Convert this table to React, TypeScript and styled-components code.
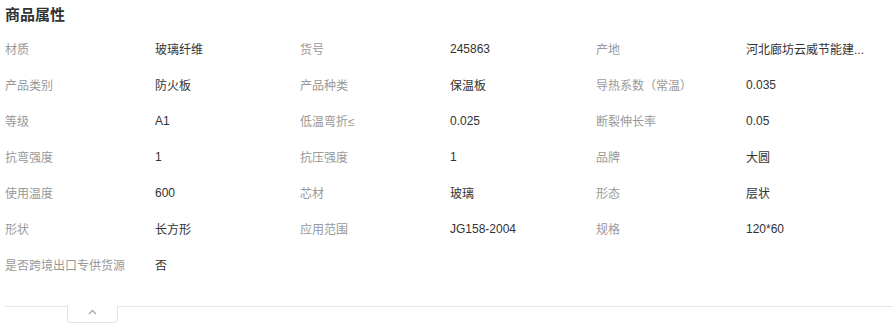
import styled, { createGlobalStyle } from "styled-components";

const GlobalStyle = createGlobalStyle`
  body {
    margin: 0;
    background: #fff;
    font-family: "Liberation Sans", "Noto Sans CJK SC", sans-serif;
  }
`;

type Attr = { label: string; value: string };

const attrs: Attr[] = [
  { label: "材质", value: "玻璃纤维" },
  { label: "货号", value: "245863" },
  { label: "产地", value: "河北廊坊云威节能建..." },
  { label: "产品类别", value: "防火板" },
  { label: "产品种类", value: "保温板" },
  { label: "导热系数（常温）", value: "0.035" },
  { label: "等级", value: "A1" },
  { label: "低温弯折≤", value: "0.025" },
  { label: "断裂伸长率", value: "0.05" },
  { label: "抗弯强度", value: "1" },
  { label: "抗压强度", value: "1" },
  { label: "品牌", value: "大圆" },
  { label: "使用温度", value: "600" },
  { label: "芯材", value: "玻璃" },
  { label: "形态", value: "层状" },
  { label: "形状", value: "长方形" },
  { label: "应用范围", value: "JG158-2004" },
  { label: "规格", value: "120*60" },
  { label: "是否跨境出口专供货源", value: "否" },
];

const App = () => {
  return (
    <Wrap>
      <GlobalStyle />
      <Title>商品属性</Title>
      <Grid>
        {attrs.map((a) => (
          <Item key={a.label}>
            <Label>{a.label}</Label>
            <Value>{a.value}</Value>
          </Item>
        ))}
      </Grid>
      <Footer>
        <ToggleTab>
          <svg width="9" height="6" viewBox="0 0 9 6">
            <polyline
              points="1,5 4.5,1.5 8,5"
              fill="none"
              stroke="#aaa"
              strokeWidth="1.4"
            />
          </svg>
        </ToggleTab>
      </Footer>
    </Wrap>
  );
};

const Wrap = styled.div`
  width: 888px;
  padding: 0 2px 0 5px;
`;

const Title = styled.div`
  height: 30px;
  line-height: 30px;
  font-size: 15px;
  font-weight: bold;
  color: #333;
`;

const Grid = styled.div`
  display: grid;
  grid-template-columns: 295px 296px 1fr;
  grid-auto-rows: 36px;
`;

const Item = styled.div`
  display: flex;
  align-items: center;
  font-size: 12px;
`;

const Label = styled.div`
  width: 150px;
  flex-shrink: 0;
  color: #999;
  white-space: nowrap;
`;

const Value = styled.div`
  color: #333;
  white-space: nowrap;
  padding-top: 1px;
`;

const Footer = styled.div`
  margin-top: 24px;
  border-top: 1px solid #e5e5e5;
  height: 30px;
`;

const ToggleTab = styled.div`
  margin-left: 62px;
  margin-top: -1px;
  width: 51px;
  height: 17px;
  background: #fff;
  border: 1px solid #e3e3e3;
  border-top: none;
  border-radius: 0 0 4px 4px;
  display: flex;
  justify-content: center;
  padding-top: 3px;
  box-sizing: border-box;
`;

export default App;
